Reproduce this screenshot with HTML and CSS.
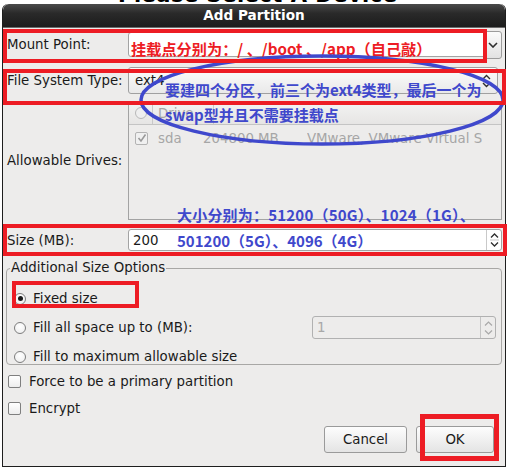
FILE: index.html
```html
<!DOCTYPE html>
<html>
<head>
<meta charset="utf-8">
<link rel="stylesheet" href="styles.css">
</head>
<body>
<div class="bgwin"><span>Please Select A Device</span></div>
<div class="dialog">
  <div class="titlebar">Add Partition</div>
  <div class="content">
    <div class="row row-mount">
      <div class="label">Mount Point:</div>
      <div class="field combo-entry">
        <div class="entry"><span class="anno-red">挂载点分别为：/ 、/boot 、/app（自己敲）</span></div>
        <div class="dropbtn"><svg width="10" height="6" viewBox="0 0 10 6"><polyline points="1,1 5,5 9,1" fill="none" stroke="#2e2e2e" stroke-width="1.6"/></svg></div>
      </div>
    </div>
    <div class="row row-fs">
      <div class="label">File System Type:</div>
      <div class="field combo">
        <span class="combo-text">ext4</span>
        <svg class="updown" width="9" height="14" viewBox="0 0 9 14"><polyline points="1,5 4.5,1.5 8,5" fill="none" stroke="#2e2e2e" stroke-width="1.4"/><polyline points="1,9 4.5,12.5 8,9" fill="none" stroke="#2e2e2e" stroke-width="1.4"/></svg>
      </div>
    </div>
    <div class="row row-drives">
      <div class="label">Allowable Drives:</div>
      <div class="field tree">
        <div class="tree-head">
          <div class="hcell hc1"><span class="radio dim"></span></div>
          <div class="hcell hc2">Drive</div>
          <div class="hcell hc3"></div>
        </div>
        <div class="tree-row">
          <span class="check dim checked"><svg width="10" height="10" viewBox="0 0 10 10"><polyline points="1.5,5 4,8 8.5,1.5" fill="none" stroke="#9a9a9a" stroke-width="1.6"/></svg></span>
          <span class="tc tc-drive">sda</span>
          <span class="tc tc-size">204800 MB</span>
          <span class="tc tc-model">VMware, VMware Virtual S</span>
        </div>
      </div>
    </div>
    <div class="row row-size">
      <div class="label">Size (MB):</div>
      <div class="field spin">
        <span class="spin-text">200</span>
        <div class="spin-btns"><svg width="9" height="16" viewBox="0 0 9 16"><polyline points="1,5.5 4.5,2 8,5.5" fill="none" stroke="#2e2e2e" stroke-width="1.3"/><line x1="0" y1="8" x2="9" y2="8" stroke="#c9c9c9" stroke-width="1"/><polyline points="1,10.5 4.5,14 8,10.5" fill="none" stroke="#2e2e2e" stroke-width="1.3"/></svg></div>
      </div>
    </div>
    <div class="frame">
      <div class="legend">Additional Size Options</div>
      <div class="opt"><span class="radio on"></span><span class="opt-text">Fixed size</span></div>
      <div class="opt"><span class="radio"></span><span class="opt-text">Fill all space up to (MB):</span>
        <div class="spin spin-off"><span class="spin-text">1</span><div class="spin-btns"><svg width="9" height="16" viewBox="0 0 9 16"><polyline points="1,5.5 4.5,2 8,5.5" fill="none" stroke="#a8a8a8" stroke-width="1.2"/><polyline points="1,10.5 4.5,14 8,10.5" fill="none" stroke="#a8a8a8" stroke-width="1.2"/></svg></div></div>
      </div>
      <div class="opt"><span class="radio"></span><span class="opt-text">Fill to maximum allowable size</span></div>
    </div>
    <div class="chk-row"><span class="check"></span><span class="chk-text">Force to be a primary partition</span></div>
    <div class="chk-row"><span class="check"></span><span class="chk-text">Encrypt</span></div>
    <div class="buttons">
      <div class="btn btn-cancel">Cancel</div>
      <div class="btn btn-ok">OK</div>
    </div>
  </div>
</div>

<svg class="ellipse" width="508" height="468" viewBox="0 0 508 468"><ellipse cx="322" cy="100" rx="181" ry="44" fill="none" stroke="#3f48cc" stroke-width="3.5"/></svg>
<div class="redbox rb-mount"></div>
<div class="redbox rb-fs"></div>
<div class="redbox rb-size"></div>
<div class="redbox rb-fixed"></div>
<div class="redbox rb-ok"></div>
<div class="anno-blue ab1">要建四个分区，前三个为ext4类型，最后一个为</div>
<div class="anno-blue ab2">swap型并且不需要挂载点</div>
<div class="anno-blue ab3">大小分别为：51200（50G）、1024（1G）、</div>
<div class="anno-blue ab4">501200（5G）、4096（4G）</div>
</body>
</html>
```

FILE: styles.css
```css
html, body {
  margin: 0;
  padding: 0;
  background: #ffffff;
}
body {
  position: relative;
  width: 508px;
  height: 468px;
  overflow: hidden;
  font-family: "DejaVu Sans", "Noto Sans CJK SC", sans-serif;
  font-size: 13.33px;
  color: #1a1a1a;
}
.bgwin {
  height: 4px;
  overflow: hidden;
  padding-left: 118px;
}
.bgwin span {
  display: block;
  margin-top: -15px;
  height: 19px;
  font-family: "DejaVu Sans", sans-serif;
  font-weight: bold;
  font-size: 21px;
  line-height: 21px;
  color: #000;
  letter-spacing: 0.5px;
  white-space: nowrap;
}
.dialog {
  margin-left: 2px;
  width: 504px;
  height: 463px;
  box-sizing: border-box;
  border: 1px solid #1e1e1e;
  border-top: none;
  border-radius: 6px 6px 0 0;
  background: #edeceb;
  overflow: hidden;
}
.titlebar {
  height: 24px;
  line-height: 23px;
  text-align: center;
  color: #ffffff;
  font-weight: bold;
  font-size: 13.6px;
  background: linear-gradient(#4a4a4a, #2a2a2a 40%, #1c1c1c);
  border-bottom: 1px solid #6b6b6b;
  box-sizing: border-box;
  border-radius: 6px 6px 0 0;
}
.content {
  padding: 0 3px;
}
.row {
  display: flex;
  align-items: center;
}
.label {
  width: 122px;
  padding-left: 1px;
  box-sizing: border-box;
  flex: none;
}
.field {
  width: 374px;
  box-sizing: border-box;
  flex: none;
}
.row-mount { margin-top: 4px; height: 25px; }
.row-fs { margin-top: 10px; height: 27px; }
.row-drives { margin-top: 7px; height: 119px; }
.row-size { margin-top: 9px; height: 22px; }

.combo-entry {
  display: flex;
  height: 25px;
}
.entry {
  flex: 1;
  background: #fff;
  border: 1px solid #a3a3a3;
  border-radius: 3px 0 0 3px;
  display: flex;
  align-items: center;
  padding-left: 2px;
  padding-top: 6px;
  box-sizing: border-box;
}
.anno-red {
  font-family: "Noto Sans CJK SC", sans-serif;
  font-weight: bold;
  font-size: 15.2px;
  line-height: 18px;
  color: #ed1c24;
  white-space: nowrap;
}
.dropbtn {
  width: 18px;
  margin-top: -1px;
  height: 28px;
  box-sizing: border-box;
  border: 1px solid #9c9c9c;
  border-radius: 3px;
  background: linear-gradient(#fbfbfb, #e2e2e2);
  display: flex;
  align-items: center;
  justify-content: center;
}
.combo {
  height: 27px;
  border: 1px solid #a0a0a0;
  border-radius: 3px;
  background: linear-gradient(#fcfcfc, #e9e9e9);
  display: flex;
  align-items: center;
  padding: 0 6px 0 6px;
  width: 370px;
}
.combo-text { flex: 1; }
.tree {
  height: 119px;
  border: 1px solid #a3a3a3;
  background: #edeceb;
  color: #a6a6a6;
}
.tree-head {
  display: flex;
  height: 22px;
  border-bottom: 1px solid #c4c4c4;
  background: linear-gradient(#f3f3f2, #e6e5e4);
}
.hcell {
  display: flex;
  align-items: center;
  height: 22px;
  border-right: 1px solid #c8c8c8;
  box-sizing: border-box;
}
.hc1 { width: 24px; padding-left: 6px; }
.hc2 { width: 61px; padding-left: 5px; }
.hc3 { flex: 1; border-right: none; }
.tree-row {
  display: flex;
  align-items: center;
  height: 26px;
  padding-left: 6px;
  white-space: nowrap;
  overflow: hidden;
}
.tc { flex: none; }
.tc-drive { width: 55px; padding-left: 10px; box-sizing: border-box; }
.tc-size { width: 104px; }
.tc-model { width: 176px; overflow: hidden; }

.radio {
  display: inline-block;
  flex: none;
  width: 12px;
  height: 12px;
  box-sizing: border-box;
  border: 1px solid #7d7d7d;
  border-radius: 50%;
  background: radial-gradient(circle at 50% 35%, #ffffff, #ececec);
  position: relative;
}
.radio.dim { border-color: #b8b8b8; background: #efefef; }
.radio.on::after {
  content: "";
  position: absolute;
  left: 2.5px;
  top: 2.5px;
  width: 5px;
  height: 5px;
  border-radius: 50%;
  background: #1a1a1a;
}
.check {
  display: inline-flex;
  align-items: center;
  justify-content: center;
  flex: none;
  width: 13px;
  height: 13px;
  box-sizing: border-box;
  border: 1px solid #7f7f7f;
  border-radius: 2px;
  background: linear-gradient(#ffffff, #ededed);
}
.check.dim { border-color: #b3b3b3; background: #f0f0f0; }

.spin {
  display: flex;
  align-items: center;
  height: 22px;
  background: #fff;
  border: 1px solid #a3a3a3;
  border-radius: 3px;
  padding-left: 4px;
}
.spin-text { flex: 1; }
.spin-btns {
  width: 14px;
  height: 100%;
  border-left: 1px solid #c9c9c9;
  display: flex;
  align-items: center;
  justify-content: center;
}

.frame {
  margin-top: 17px;
  height: 97px;
  box-sizing: border-box;
  border: 1px solid #a8a7a5;
  border-radius: 4px;
  padding: 0 5px 0 7px;
}
.legend {
  display: inline-block;
  margin-top: -9px;
  margin-left: -4px;
  padding: 0 1px;
  height: 16px;
  line-height: 16px;
  background: #edeceb;
  vertical-align: top;
}
.opt {
  display: flex;
  align-items: center;
  height: 29px;
}
.opt-text { margin-left: 7px; }
.spin-off {
  margin-left: auto;
  width: 184px;
  height: 23px;
  box-sizing: border-box;
  background: #edeceb;
  border-color: #b1b1b1;
  color: #a8a8a8;
}
.spin-off .spin-btns { border-left-color: #c4c4c4; }

.chk-row {
  display: flex;
  align-items: center;
  height: 27px;
  padding-left: 2px;
}
.frame + .chk-row { margin-top: 3px; }
.chk-text { margin-left: 8px; }

.buttons {
  margin-top: 4px;
  display: flex;
  justify-content: flex-end;
  gap: 9px;
  padding-right: 8px;
}
.btn {
  height: 27px;
  box-sizing: border-box;
  border: 1px solid #9a9a9a;
  border-radius: 3px;
  background: linear-gradient(#fdfdfd, #e4e4e4);
  display: flex;
  align-items: center;
  justify-content: center;
}
.btn-cancel { width: 83px; }
.btn-ok { width: 78px; }

/* annotations drawn over the screenshot */
.ellipse {
  position: absolute;
  left: 0;
  top: 0;
  pointer-events: none;
}
.redbox {
  position: absolute;
  box-sizing: border-box;
  border: 4px solid #ed1c24;
}
.rb-mount { left: 3px; top: 29px; width: 484px; height: 34px; }
.rb-fs { left: 3px; top: 69px; width: 503px; height: 36px; }
.rb-size { left: 3px; top: 224px; width: 504px; height: 32px; }
.rb-fixed { left: 12px; top: 281px; width: 127px; height: 27px; }
.rb-ok { left: 420px; top: 414px; width: 79px; height: 47px; border-width: 5px; }
.anno-blue {
  position: absolute;
  font-family: "Noto Sans CJK SC", sans-serif;
  font-weight: bold;
  font-size: 15px;
  line-height: 18px;
  color: #3f48cc;
  white-space: nowrap;
}
.ab1 { left: 165px; top: 81px; }
.ab2 { left: 165px; top: 106px; }
.ab3 { left: 177px; top: 206px; letter-spacing: 0.2px; }
.ab4 { left: 177px; top: 232px; }
```
